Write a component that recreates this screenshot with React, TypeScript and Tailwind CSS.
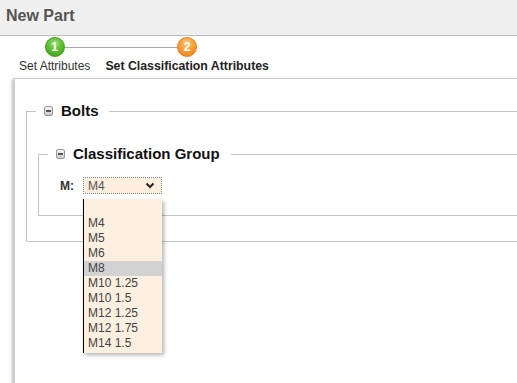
import React from "react";

const font = { fontFamily: '"Liberation Sans", Arial, sans-serif' };

const MinusBox = () => (
  <span className="inline-flex h-[10px] w-[9px] items-center justify-center rounded-[2px] border border-[#9a9a9a] bg-gradient-to-b from-[#f4f4f4] to-[#c9c9c9]">
    <span className="h-[2px] w-[5px] bg-[#555]" />
  </span>
);

const StepDot = ({ n, tone }: { n: number; tone: "green" | "orange" }) => (
  <div
    className={
      tone === "green"
        ? "relative z-10 flex h-[20px] w-[20px] items-center justify-center rounded-full border border-[#4a9a22] bg-[radial-gradient(circle_at_50%_30%,#9be07a_0%,#5cbf2f_45%,#3e9a1a_100%)] text-[12px] font-bold text-white"
        : "relative z-10 flex h-[20px] w-[20px] items-center justify-center rounded-full border border-[#e0801a] bg-[radial-gradient(circle_at_50%_30%,#ffd08a_0%,#f8a036_45%,#e8811a_100%)] text-[12px] font-bold text-white"
    }
  >
    {n}
  </div>
);

const options = ["", "M4", "M5", "M6", "M8", "M10 1.25", "M10 1.5", "M12 1.25", "M12 1.75", "M14 1.5"];

export default function App() {
  return (
    <div className="h-[383px] w-[517px] overflow-hidden bg-white text-[12px] text-[#333]" style={font}>
      {/* header */}
      <div className="flex h-[36px] items-start border-b border-[#bdbdbd] bg-[#f0f0f0] px-[6px] pt-[4px]">
        <h1 className="text-[16px] font-bold text-[#555]">New Part</h1>
      </div>

      {/* wizard steps */}
      <div className="relative ml-[19px] mt-[1px] flex h-[41px] gap-[15px]">
        <div className="absolute left-[46px] top-[10px] h-[1px] w-[112px] bg-[#a8a8a8]" />
        <div className="flex flex-col items-center">
          <StepDot n={1} tone="green" />
          <span className="mt-[2px] leading-[14px] text-[#333]">Set Attributes</span>
        </div>
        <div className="flex flex-col items-center">
          <StepDot n={2} tone="orange" />
          <span className="mt-[2px] text-[12.3px] font-bold leading-[14px] text-[#222]">Set Classification Attributes</span>
        </div>
      </div>

      {/* panel */}
      <div className="ml-[14px] h-[320px] w-[540px] border border-[#cfcfcf] bg-white pl-[11px] pt-[23px] shadow-[-2px_1px_3px_rgba(0,0,0,0.25)]">
        <fieldset className="border border-[#c4c4c4] pb-[25px]">
          <legend className="ml-[9px] flex h-[18px] items-center gap-[8px] pl-[8px] pr-[10px]">
            <MinusBox />
            <span className="text-[15px] font-bold text-[#111]">Bolts</span>
          </legend>

          <fieldset className="ml-[11px] mt-[25px] border border-[#c4c4c4] pb-[20px]">
            <legend className="ml-[9px] flex h-[18px] items-center gap-[8px] pl-[8px] pr-[11px]">
              <MinusBox />
              <span className="text-[15px] font-bold text-[#111]">Classification Group</span>
            </legend>

            <div className="flex items-start gap-[9px] pl-[21px] pt-[14px]">
              <span className="font-bold text-[#333]">M:</span>
              <div className="relative">
                <div className="flex h-[17px] w-[79px] items-center justify-between border border-dotted border-[#8a8a8a] bg-[#fdeedd] pl-[4px] pr-[6px] text-[#555]">
                  <span>M4</span>
                  <svg width="10" height="7" viewBox="0 0 10 7">
                    <path d="M1.5 1.5 L5 5 L8.5 1.5" fill="none" stroke="#222" strokeWidth="2" />
                  </svg>
                </div>

                {/* open dropdown */}
                <ul className="absolute left-0 top-[22px] z-20 w-[79px] border-l border-black bg-[#fdf0e1] py-[2px] shadow-[2px_2px_4px_rgba(0,0,0,0.3)]">
                  {options.map((o, i) => (
                    <li
                      key={i}
                      className={
                        o === "M8"
                          ? "h-[15px] bg-[#d2d2d2] pl-[4px] leading-[15px] text-[#444]"
                          : "h-[15px] pl-[4px] leading-[15px] text-[#444]"
                      }
                    >
                      {o}
                    </li>
                  ))}
                </ul>
              </div>
            </div>
          </fieldset>
        </fieldset>
      </div>
    </div>
  );
}
